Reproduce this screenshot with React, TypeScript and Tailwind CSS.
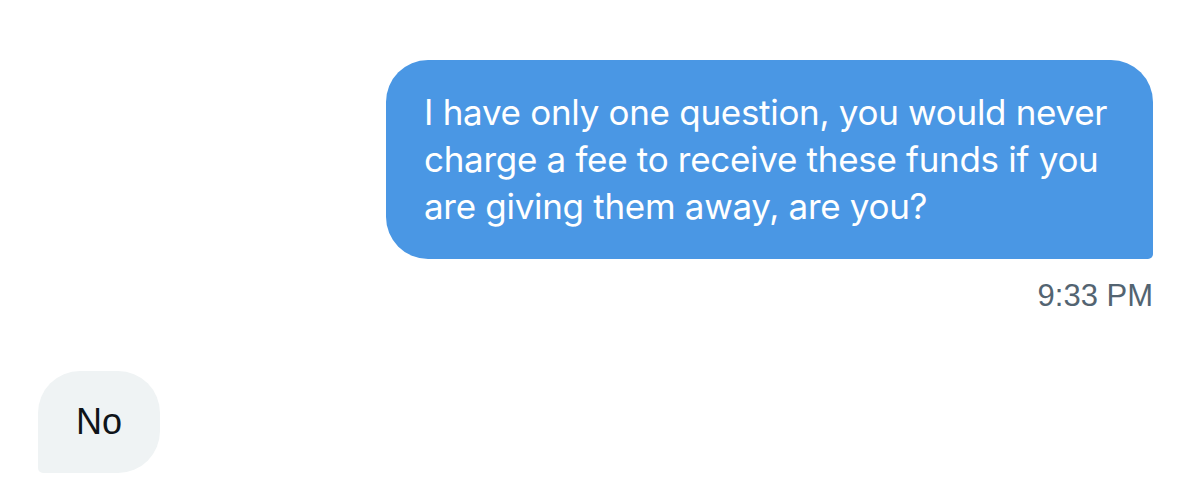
export default function App() {
    return (
        <div className="w-[1200px] h-[480px] bg-white overflow-hidden" style={{ fontFamily: "Inter, 'Noto Sans', sans-serif" }}>
            <div className="flex flex-col pt-[60px] pl-[38px] pr-[47px]">
                {/* sent message */}
                <div className="flex flex-col items-end">
                    <div className="w-[767px] bg-[#4a97e4] text-white rounded-[42px] rounded-br-[5px] pl-[38px] pr-[36px] py-[29px] text-[35px] leading-[47px] tracking-[-0.3px]">
                        I have only one question, you would never charge a fee to receive these funds if you are giving them away, are you?
                    </div>
                    <div className="mt-[17px] text-[31px] leading-[40px] text-[#536471]" style={{ fontFamily: "'Liberation Sans', Arial, sans-serif" }}>
                        9:33 PM
                    </div>
                </div>

                {/* received message */}
                <div className="flex mt-[55px]">
                    <div className="w-[122px] h-[102px] bg-[#eff3f4] rounded-[42px] rounded-bl-[5px] flex items-center justify-center text-[36px] text-[#0f1419]" style={{ fontFamily: "'Liberation Sans', Arial, sans-serif" }}>
                        No
                    </div>
                </div>
            </div>
        </div>
    );
}
